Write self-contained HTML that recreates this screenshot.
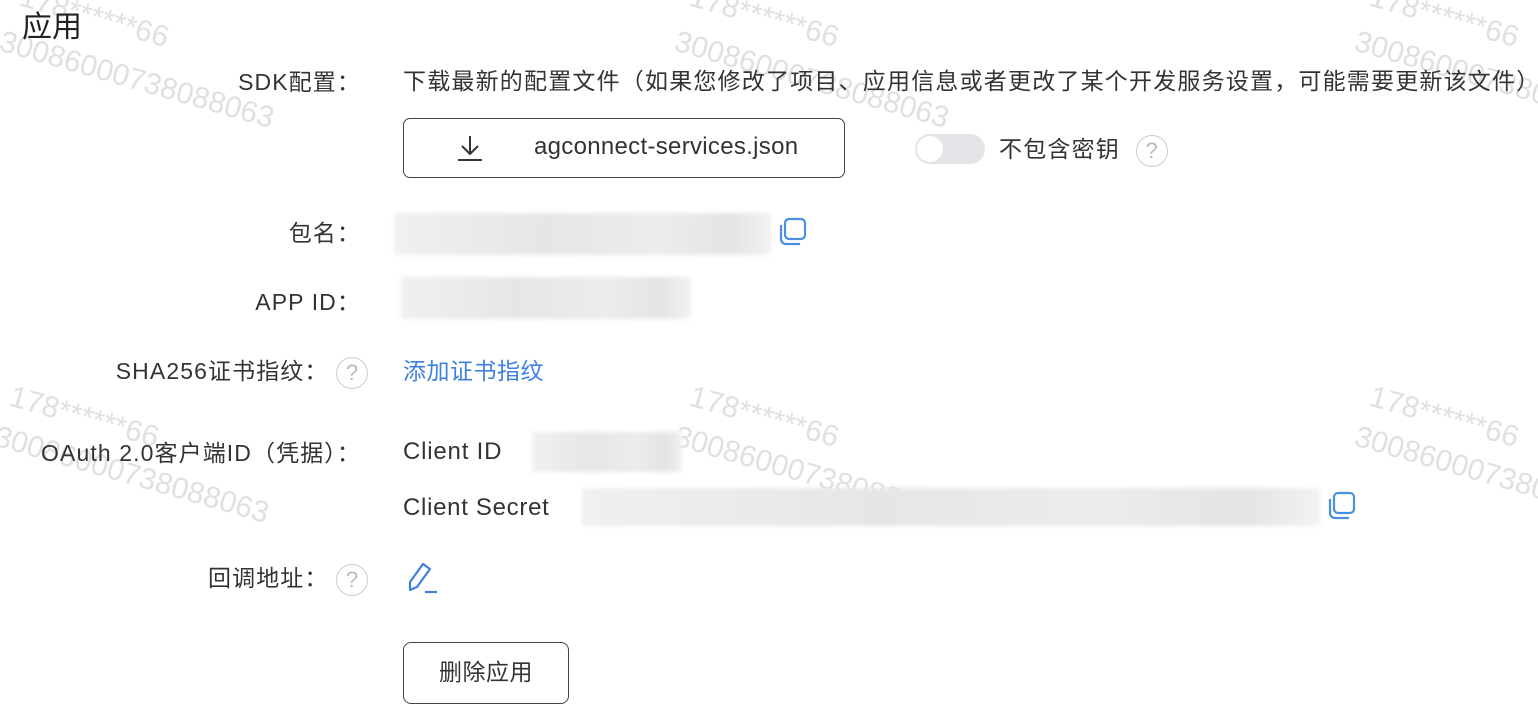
<!DOCTYPE html>
<html><head><meta charset="utf-8"><style>
body{margin:0;width:1538px;height:720px;background:#fff;position:relative;overflow:hidden;font-family:"Liberation Sans","Noto Sans CJK SC",sans-serif;color:#222;}
.a{position:absolute;white-space:nowrap}
.lab{position:absolute;right:1177px;font-size:23px;letter-spacing:1.1px;color:#333;white-space:nowrap;line-height:30px}
.wm{position:absolute;color:#e0e0e0;font-size:30px;transform:rotate(16deg);transform-origin:0 0;white-space:nowrap;line-height:34px}
.blur{position:absolute;background:linear-gradient(90deg,#f0f0f0,#e6e6e6 40%,#ececec 70%,#e4e4e4 90%,#f2f2f2);filter:blur(2px)}
.q{display:inline-block;width:32px;height:32px;border:1.5px solid #ccc;border-radius:50%;color:#bbb;font-size:22px;text-align:center;line-height:30px;box-sizing:border-box;vertical-align:middle;letter-spacing:0}
</style></head><body>
<div class="wm" style="left:25px;top:-20px">178******66</div>
<div class="wm" style="left:5px;top:25px">30086000738088063</div>
<div class="wm" style="left:695px;top:-20px">178******66</div>
<div class="wm" style="left:680px;top:25px">30086000738088063</div>
<div class="wm" style="left:1375px;top:-20px">178******66</div>
<div class="wm" style="left:1360px;top:25px">30086000738088063</div>
<div class="wm" style="left:15px;top:380px">178******66</div>
<div class="wm" style="left:0px;top:420px">30086000738088063</div>
<div class="wm" style="left:695px;top:380px">178******66</div>
<div class="wm" style="left:680px;top:420px">30086000738088063</div>
<div class="wm" style="left:1375px;top:380px">178******66</div>
<div class="wm" style="left:1360px;top:420px">30086000738088063</div>

<div class="a" style="left:22px;top:2px;font-size:30px;color:#222">应用</div>
<div class="lab" style="top:67px">SDK配置：</div>
<div class="a" style="left:403px;top:66px;font-size:23px;letter-spacing:1.2px;line-height:30px;color:#333">下载最新的配置文件（如果您修改了项目、应用信息或者更改了某个开发服务设置，可能需要更新该文件）</div>
<div class="a" style="left:403px;top:118px;width:442px;height:60px;border:1.5px solid #444;border-radius:7px;box-sizing:border-box"></div>
<svg class="a" style="left:455px;top:133px" width="30" height="30" viewBox="0 0 30 30"><path d="M15 3v18M7 13l8 8 8-8M3 27h24" stroke="#333" stroke-width="2" fill="none"/></svg>
<div class="a" style="left:534px;top:132px;font-size:24px;letter-spacing:0.3px;color:#333;line-height:30px">agconnect-services.json</div>
<div class="a" style="left:915px;top:134px;width:70px;height:30px;background:#e4e4e8;border-radius:15px"></div>
<div class="a" style="left:917px;top:136px;width:26px;height:26px;background:#fff;border-radius:50%"></div>
<div class="a" style="left:999px;top:134px;font-size:23px;letter-spacing:1.2px;line-height:30px;color:#333">不包含密钥 <span class="q" style="margin-left:8px">?</span></div>

<div class="lab" style="top:218px">包名：</div>
<div class="blur" style="left:394px;top:213px;width:377px;height:42px"></div>
<svg class="a" style="left:776px;top:216px" width="32" height="32" viewBox="0 0 32 32"><rect x="9" y="3" width="20" height="20" rx="4" stroke="#4a90e2" stroke-width="2.2" fill="none"/><path d="M5 9v14a5 5 0 0 0 5 5h14" stroke="#4a90e2" stroke-width="2.2" fill="none"/></svg>

<div class="lab" style="top:287px">APP ID：</div>
<div class="blur" style="left:401px;top:277px;width:290px;height:42px"></div>

<div class="lab" style="top:356px;right:1170px">SHA256证书指纹： <span class="q">?</span></div>
<div class="a" style="left:403px;top:356px;font-size:23px;letter-spacing:0.5px;line-height:30px;color:#3f7fe0">添加证书指纹</div>

<div class="lab" style="top:438px">OAuth 2.0客户端ID（凭据）：</div>
<div class="a" style="left:403px;top:437px;font-size:24px;letter-spacing:0.8px;line-height:30px;color:#333">Client ID</div>
<div class="blur" style="left:532px;top:432px;width:150px;height:40px"></div>
<div class="a" style="left:403px;top:493px;font-size:24px;letter-spacing:0.7px;line-height:30px;color:#333">Client Secret</div>
<div class="blur" style="left:582px;top:488px;width:738px;height:38px"></div>
<svg class="a" style="left:1325px;top:490px" width="32" height="32" viewBox="0 0 32 32"><rect x="9" y="3" width="20" height="20" rx="4" stroke="#4a90e2" stroke-width="2.2" fill="none"/><path d="M5 9v14a5 5 0 0 0 5 5h14" stroke="#4a90e2" stroke-width="2.2" fill="none"/></svg>

<div class="lab" style="top:563px;right:1170px">回调地址： <span class="q">?</span></div>
<svg class="a" style="left:403px;top:560px" width="36" height="36" viewBox="0 0 36 36"><path d="M20 4l7 5-13 18-7 3 0-8z" stroke="#3f7fe0" stroke-width="2.2" fill="none" stroke-linejoin="round"/><path d="M22 32h12" stroke="#3f7fe0" stroke-width="2.2"/></svg>

<div class="a" style="left:403px;top:642px;width:166px;height:62px;border:1.5px solid #444;border-radius:8px;box-sizing:border-box;font-size:23px;letter-spacing:0.5px;line-height:59px;text-align:center;color:#333">删除应用</div>
</body></html>
